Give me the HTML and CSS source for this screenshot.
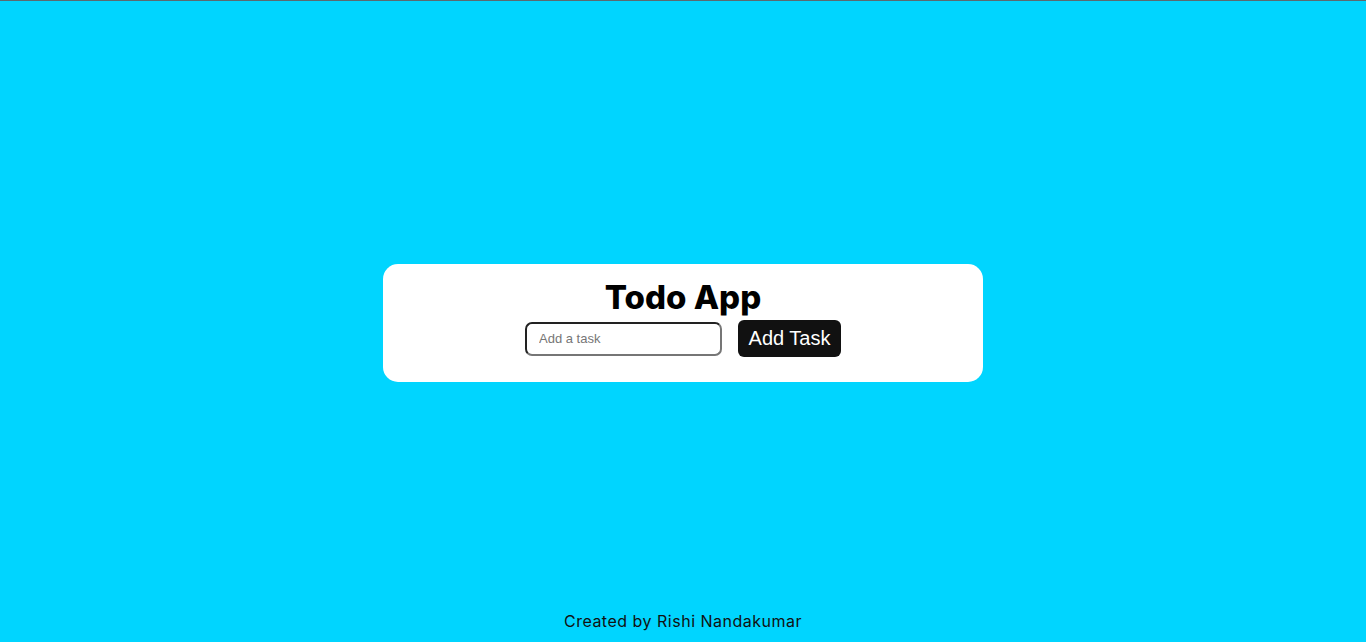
FILE: index.html
```html
<!DOCTYPE html>
<html>
<head>
<meta charset="utf-8">
<link rel="stylesheet" href="styles.css">
</head>
<body>
<div class="topline"></div>
<main class="main">
  <div class="card">
    <h1 class="title">Todo App</h1>
    <div class="row">
      <input class="task-input" type="text" placeholder="Add a task">
      <button class="add-btn">Add Task</button>
    </div>
  </div>
</main>
<footer class="footer">Created by Rishi Nandakumar</footer>
</body>
</html>
```
FILE: styles.css
```css
html, body {
  margin: 0;
  padding: 0;
}
body {
  height: 642px;
  background: #00d5ff;
  display: flex;
  flex-direction: column;
  font-family: "Inter", "Liberation Sans", sans-serif;
  overflow: hidden;
}
.topline {
  height: 1px;
  background: #5a6a70;
}
.main {
  flex: 1;
  display: flex;
  align-items: center;
  justify-content: center;
  padding-top: 35px;
}
.card {
  width: 600px;
  height: 118px;
  box-sizing: border-box;
  background: #fff;
  border-radius: 15px;
  display: flex;
  flex-direction: column;
  align-items: center;
  padding-top: 15px;
}
.title {
  margin: 0;
  font-size: 33px;
  font-weight: 800;
  line-height: 36px;
  color: #000;
  letter-spacing: 0;
}
.row {
  display: flex;
  align-items: center;
  gap: 16px;
  margin-top: 5px;
}
.task-input {
  width: 197px;
  height: 34px;
  box-sizing: border-box;
  border: 2px solid;
  border-color: #222 #767676 #767676 #222;
  border-radius: 7px;
  padding: 0 12px;
  font-family: "Liberation Sans", Arial, sans-serif;
  font-size: 13px;
  outline: none;
}
.task-input::placeholder {
  color: #767676;
}
.add-btn {
  height: 37px;
  width: 103px;
  background: #111;
  color: #fff;
  border: none;
  border-radius: 6px;
  font-family: "Liberation Sans", Arial, sans-serif;
  font-size: 20px;
  padding: 0;
}
.footer {
  text-align: center;
  font-family: "Inter", "Liberation Sans", sans-serif;
  font-size: 16px;
  letter-spacing: 0.5px;
  color: #111;
  height: 32px;
  line-height: 22px;
}
```
